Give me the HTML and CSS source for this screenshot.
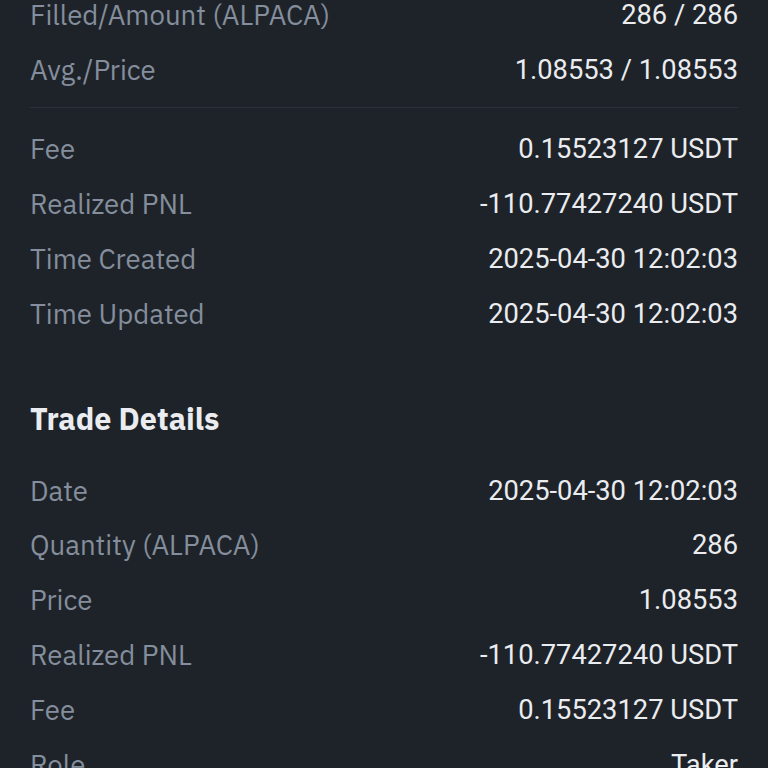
FILE: index.html
```html
<!DOCTYPE html>
<html>
<head>
<meta charset="utf-8">
<link rel="stylesheet" href="styles.css">
</head>
<body>
<div class="page">
  <div class="group">
    <div class="row"><span class="label">Filled/Amount (ALPACA)</span><span class="value">286 / 286</span></div>
    <div class="row"><span class="label">Avg./Price</span><span class="value">1.08553 / 1.08553</span></div>
  </div>
  <div class="divider"></div>
  <div class="group">
    <div class="row"><span class="label">Fee</span><span class="value">0.15523127 USDT</span></div>
    <div class="row"><span class="label">Realized PNL</span><span class="value">-110.77427240 USDT</span></div>
    <div class="row"><span class="label">Time Created</span><span class="value">2025-04-30 12:02:03</span></div>
    <div class="row"><span class="label">Time Updated</span><span class="value">2025-04-30 12:02:03</span></div>
  </div>
  <h2 class="section-title">Trade Details</h2>
  <div class="group">
    <div class="row"><span class="label">Date</span><span class="value">2025-04-30 12:02:03</span></div>
    <div class="row"><span class="label">Quantity (ALPACA)</span><span class="value">286</span></div>
    <div class="row"><span class="label">Price</span><span class="value">1.08553</span></div>
    <div class="row"><span class="label">Realized PNL</span><span class="value">-110.77427240 USDT</span></div>
    <div class="row"><span class="label">Fee</span><span class="value">0.15523127 USDT</span></div>
    <div class="row"><span class="label">Role</span><span class="value">Taker</span></div>
  </div>
</div>
</body>
</html>
```
FILE: styles.css
```css
html, body {
  margin: 0;
  padding: 0;
  background: #1e2329;
  overflow: hidden;
}
.page {
  margin-top: -12.5px;
  padding: 0 30px;
}
.row {
  height: 54.8px;
  display: flex;
  align-items: center;
  justify-content: space-between;
  white-space: nowrap;
}
.label {
  font-family: "IBM Plex Sans", "Noto Sans", sans-serif;
  font-size: 27.6px;
  color: #848e9c;
}
.value {
  font-family: Roboto, sans-serif;
  font-size: 27.3px;
  color: #eaecef;
}
.divider {
  height: 1px;
  background: #2b3139;
  margin: 10px 0 14px;
}
.section-title {
  margin: 50px 0 18px;
  height: 54px;
  display: flex;
  align-items: center;
  font-family: "IBM Plex Sans", "Noto Sans", sans-serif;
  font-size: 30.5px;
  font-weight: 700;
  color: #eaecef;
}
```
